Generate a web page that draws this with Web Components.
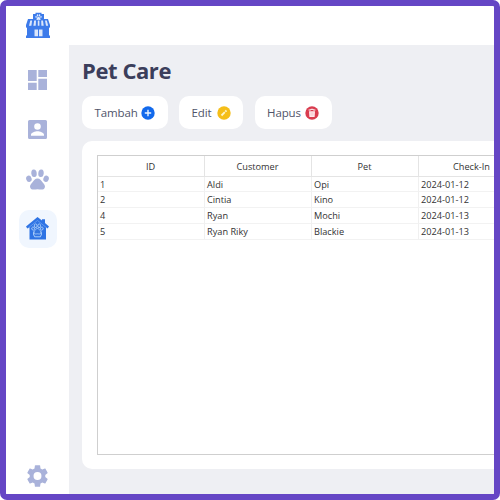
<!DOCTYPE html>
<html lang="id"><head><meta charset="utf-8"><title>Pet Care</title>
<style>html,body{margin:0;width:500px;height:500px;overflow:hidden;background:#fff;font-family:"Open Sans","Noto Sans",sans-serif}</style></head>
<body><pet-app></pet-app>
<script>
const define=(name,html,init)=>customElements.define(name,class extends HTMLElement{
  constructor(){super();const t=document.createElement('template');t.innerHTML=html;
    this.attachShadow({mode:'open'}).append(t.content.cloneNode(true));}
  connectedCallback(){if(init)init.call(this);}
});
const PAW='<ellipse cx="2.900" cy="9.800" rx="2.700" ry="3.200" transform="rotate(-20 2.900 9.800)"/><ellipse cx="8" cy="4.200" rx="2.700" ry="3.800" transform="rotate(-6 8 4.200)"/><ellipse cx="15" cy="4.200" rx="2.700" ry="3.800" transform="rotate(6 15 4.200)"/><ellipse cx="20.100" cy="9.800" rx="2.700" ry="3.200" transform="rotate(20 20.100 9.800)"/><path d="M11.5 9.500c-2.500 0-3.600 2.200-5.200 4-1.500 1.600-2.700 3-2.100 5 .8 2.600 3.700 2.200 7.300 1.700 3.600.5 6.500.9 7.300-1.700.6-2-.6-3.400-2.100-5-1.600-1.800-2.700-4-5.200-4z"/>';
const ICONS={
 store:['26 27',`<path fill="#3d7bea" d="M8 7V2h2.500V.8h6V2H19v5h4l2 6v1.500a1.500 1.500 0 0 1-1 1.500v7.500h1V26H1v-2.500h1V16a1.500 1.500 0 0 1-1-1.500V13l2-6z"/><path fill="#fff" d="M5.300 8.500h1.800l-.7 5.200H4zM9.200 8.500H11l-.3 5.200H8.400zM12.800 8.500h1.600v5.200h-1.600zM16.200 8.500H18l.7 5.200h-2.300zM20 8.500h1.800l1.400 5.200h-2.200zM9.500 17.500h3.500v6.800H9.500zM14 17.500h3.500v6.800H14z" opacity=".82"/><g fill="#dceaff" transform="translate(10.300 2.200) scale(.28)">${PAW}</g>`],
 dash:['19 20','<path fill="#a9b2da" d="M0 0h8.700v11H0zM10.300 0H19v7h-8.700zM0 12.700h8.700V20H0zM10.300 8.700H19V20h-8.700z"/>'],
 user:['19 19','<path fill="#a9b2da" fill-rule="evenodd" d="M1.500 0h16A1.500 1.500 0 0 1 19 1.500v16a1.500 1.500 0 0 1-1.500 1.500h-16A1.500 1.500 0 0 1 0 17.500v-16A1.500 1.500 0 0 1 1.500 0zM9.500 3.200a3.300 3.300 0 1 0 0 6.600 3.300 3.300 0 0 0 0-6.600zM3 15.800h13v-1c0-2.200-4.300-3.500-6.500-3.500S3 12.600 3 14.800z"/>'],
 paw:['23 21',`<g fill="#a9b2da">${PAW}</g>`],
 house:['23 23',`<path fill="#2f74e4" d="M11.500 0 16 3.600V2.300h3V6l4 3.500-1.400 2L20 10.300V22.500H3.500V10.300l-2.200 1.200L0 9.500z"/><path d="M2.500 10.700 11.500 3.500l9 7.200" stroke="#69a0f2" fill="none" stroke-width=".8"/><g transform="translate(5.700 6.700) scale(.5)" fill="#3476df" stroke="#b9d8fc" stroke-width="1.500">${PAW}</g><path d="M8.200 14.500 7.400 17l1.200 2.800h5.800l1.200-2.800-.9-2.500" fill="none" stroke="#b9d8fc" stroke-width=".9"/>`],
 gear:['24 24','<path fill="#a9b2da" d="M19.430 12.980c.04-.32.07-.64.07-.98s-.03-.66-.07-.98l2.110-1.650c.19-.15.24-.42.12-.64l-2-3.460c-.12-.22-.39-.3-.61-.22l-2.490 1c-.52-.4-1.080-.73-1.690-.98l-.38-2.650A.488.488 0 0 0 14 2h-4c-.25 0-.46.18-.49.42l-.38 2.650c-.61.25-1.170.59-1.690.98l-2.490-1c-.23-.09-.49 0-.61.22l-2 3.460c-.13.22-.07.49.12.64l2.110 1.650c-.04.32-.07.65-.07.98s.03.66.07.98l-2.110 1.650c-.19.15-.24.42-.12.64l2 3.460c.12.22.39.3.61.22l2.490-1c.52.4 1.080.73 1.690.98l.38 2.650c.03.24.24.42.49.42h4c.25 0 .46-.18.49-.42l.38-2.650c.61-.25 1.170-.59 1.690-.98l2.490 1c.23.09.49 0 .61-.22l2-3.460c.12-.22.07-.49-.12-.64zM12 15.800a3.800 3.800 0 1 1 0-7.600 3.800 3.800 0 0 1 0 7.600z"/>'],
 add:['14 14','<circle cx="7" cy="7" r="6.700" fill="#1269ec"/><path d="M7 3.800v6.400M3.800 7h6.400" stroke="#e7f2ff" stroke-width="1.400"/>'],
 edit:['14 14','<circle cx="7" cy="7" r="6.700" fill="#f5be18"/><path d="m4.500 9.500 3.300-3.300" stroke="#fff5c8" stroke-width="1.900"/><path d="m8.300 5.700 1.200-1.200" stroke="#fff5c8" stroke-width="1.900"/>'],
 trash:['14 14','<circle cx="7" cy="7" r="6.700" fill="#d93c4f"/><path d="M3.600 4h2.200V3.300h2.400V4h2.200" stroke="#fff" stroke-width="1" fill="none"/><path d="M4 5.200h6l-.4 5.700H4.400z" fill="#ffe9ec"/><path d="M6.100 6.200v3.500M7.900 6.200v3.500" stroke="#eca0aa" stroke-width=".5"/>']
};
define('app-icon','<style>:host{display:block;flex:none}svg{display:block;width:100%;height:100%}</style><svg preserveAspectRatio="none"></svg>',function(){
  const [size,body]=ICONS[this.getAttribute('name')],s=this.shadowRoot.querySelector('svg');
  s.setAttribute('viewBox','0 0 '+size);s.innerHTML=body;});
define('side-bar',`<style>:host{display:flex;flex-direction:column;align-items:center;width:63px;box-sizing:border-box;padding:5.500px 0 5px;background:#fff}
 .i{display:grid;place-items:center;width:38px;height:38px;margin-bottom:11.800px;border-radius:10px}.on{background:#f0f6fe}
 .logo{width:26px;height:27px;margin-bottom:22px}</style>
 <app-icon class="logo" name="store"></app-icon>
 <div class="i"><app-icon name="dash" style="width:19px;height:20px"></app-icon></div>
 <div class="i"><app-icon name="user" style="width:19px;height:19px"></app-icon></div>
 <div class="i"><app-icon name="paw" style="width:23px;height:21px"></app-icon></div>
 <div class="i on"><app-icon name="house" style="width:23px;height:23px"></app-icon></div>
 <app-icon name="gear" style="width:25px;height:26px;margin-top:auto"></app-icon>`);
define('action-button',`<style>:host{display:flex;align-items:center;justify-content:space-between;box-sizing:border-box;height:33px;padding:0 12.500px;border-radius:10px;background:#fff;color:#50546a;font-size:11.500px;line-height:16px}
 span{letter-spacing:-.1px}</style><span><slot></slot></span><slot name="icon"></slot>`);
define('data-table',`<style>:host{display:grid;grid-template-columns:repeat(4,107px);grid-template-rows:20.500px repeat(4,15.800px);box-sizing:border-box;border:1px solid #cfcfcf;border-right:0;overflow:hidden;color:#333;font-size:9.200px;background:#fff}
 div{box-sizing:border-box;border-right:1px solid #f0f0f0;border-bottom:1px solid #f2f2f2;white-space:nowrap;line-height:16px;padding-left:2.500px}
 .h{text-align:center;line-height:21px;padding:0;border-color:#e4e4e4}</style>`,function(){
  if(this.shadowRoot.querySelector('div'))return;
  const rows=[['ID','Customer','Pet','Check-In'],['1','Aldi','Opi','2024-01-12'],['2','Cintia','Kino','2024-01-12'],['4','Ryan','Mochi','2024-01-13'],['5','Ryan Riky','Blackie','2024-01-13']];
  rows.forEach((r,i)=>r.forEach(t=>{const d=document.createElement('div');d.textContent=t;if(!i)d.className='h';this.shadowRoot.append(d);}));});
define('content-card','<style>:host{display:block;box-sizing:border-box;background:#fff;border-radius:10px 0 0 10px;overflow:hidden;padding:14px 0 14px 14.500px}</style><slot></slot>');
define('pet-app',`<style>:host{display:flex;box-sizing:border-box;width:500px;height:500px;border:6px solid #6546c5;border-radius:7px;overflow:hidden;background:#fff}
 main{flex:1;min-width:0;margin-top:39px;background:#eeeff3;padding:12px 0 0 13px;box-sizing:border-box;height:449px;overflow:hidden}
 h1{font-size:22px;line-height:26px;margin:0 0 13px;color:#3b3e5b;font-weight:700;letter-spacing:-.42px}
 nav{display:flex;gap:11.500px;margin-bottom:12px}content-card{height:328px}data-table{height:300px}
 app-icon{width:14px;height:14px}</style>
 <side-bar></side-bar><main><h1>Pet Care</h1><nav>
 <action-button style="width:85.500px">Tambah<app-icon slot="icon" name="add"></app-icon></action-button>
 <action-button style="width:64px">Edit<app-icon slot="icon" name="edit"></app-icon></action-button>
 <action-button style="width:77px">Hapus<app-icon slot="icon" name="trash"></app-icon></action-button></nav>
 <content-card><data-table></data-table></content-card></main>`);
</script></body></html>
